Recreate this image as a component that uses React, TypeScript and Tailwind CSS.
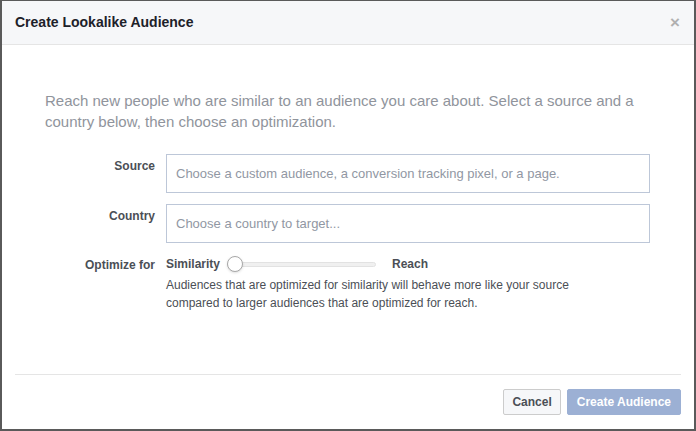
export default function App() {
  return (
    <div className="w-[696px] h-[431px] bg-white border-x-2 border-t border-b-2 border-[#5a5a5a] flex flex-col" style={{ fontFamily: "'Liberation Sans', Arial, sans-serif" }}>
      <div className="h-[44px] shrink-0 bg-[#f6f7f9] border-b border-[#e5e5e5] flex items-center justify-between pl-[13px] pr-[14px]">
        <span className="text-[14px] font-bold text-[#1d2129]">Create Lookalike Audience</span>
        <span className="text-[#b0b0b0] text-[17px] font-bold leading-none">×</span>
      </div>
      <div className="flex-1 flex flex-col">
        <p className="mt-[45px] ml-[43px] mr-[30px] text-[15px] leading-[21px] text-[#90949c]">
          Reach new people who are similar to an audience you care about. Select a source and a country below, then choose an optimization.
        </p>
        <div className="mt-[22px] flex flex-col gap-[11px]">
          <div className="flex">
            <div className="w-[164px] pt-[3px] pr-[11px] text-right text-[12px] font-bold text-[#4b4f56]">Source</div>
            <div className="w-[484px] h-[39px] border border-[#bdc7d8] flex items-center px-[9px] text-[13px] text-[#9197a3]">
              Choose a custom audience, a conversion tracking pixel, or a page.
            </div>
          </div>
          <div className="flex">
            <div className="w-[164px] pt-[3px] pr-[11px] text-right text-[12px] font-bold text-[#4b4f56]">Country</div>
            <div className="w-[484px] h-[39px] border border-[#bdc7d8] flex items-center px-[9px] text-[13px] text-[#9197a3]">
              Choose a country to target...
            </div>
          </div>
        </div>
        <div className="mt-[12px] flex">
          <div className="w-[164px] pt-[1px] pr-[11px] text-right text-[12px] font-bold text-[#4b4f56]">Optimize for</div>
          <div className="flex flex-col">
            <div className="flex items-center h-[18px] text-[12px] font-bold text-[#4b4f56]">
              <span>Similarity</span>
              <div className="relative ml-[7px] w-[149px] h-[16px] flex items-center">
                <div className="w-full h-[5px] rounded-full bg-[#f0f0f0] border border-[#e2e2e2]" />
                <div className="absolute left-0 top-0 w-[16px] h-[16px] rounded-full bg-white border border-[#a8a8a8] shadow-sm" />
              </div>
              <span className="ml-[16px]">Reach</span>
            </div>
            <p className="mt-[3px] w-[445px] text-[12px] leading-[18px] text-[#4b4f56]">
              Audiences that are optimized for similarity will behave more like your source compared to larger audiences that are optimized for reach.
            </p>
          </div>
        </div>
        <div className="mt-auto mx-[13px] border-t border-[#e5e5e5] h-[55px] flex items-center justify-end gap-[6px]">
          <button className="h-[26px] px-[8px] border border-[#cccccc] bg-[#f6f7f9] rounded-[2px] text-[12px] font-bold text-[#4b4f56]">Cancel</button>
          <button className="h-[26px] px-[9px] border border-[#9cb0d4] bg-[#9cb0d4] rounded-[2px] text-[12px] font-bold text-white">Create Audience</button>
        </div>
      </div>
    </div>
  );
}
